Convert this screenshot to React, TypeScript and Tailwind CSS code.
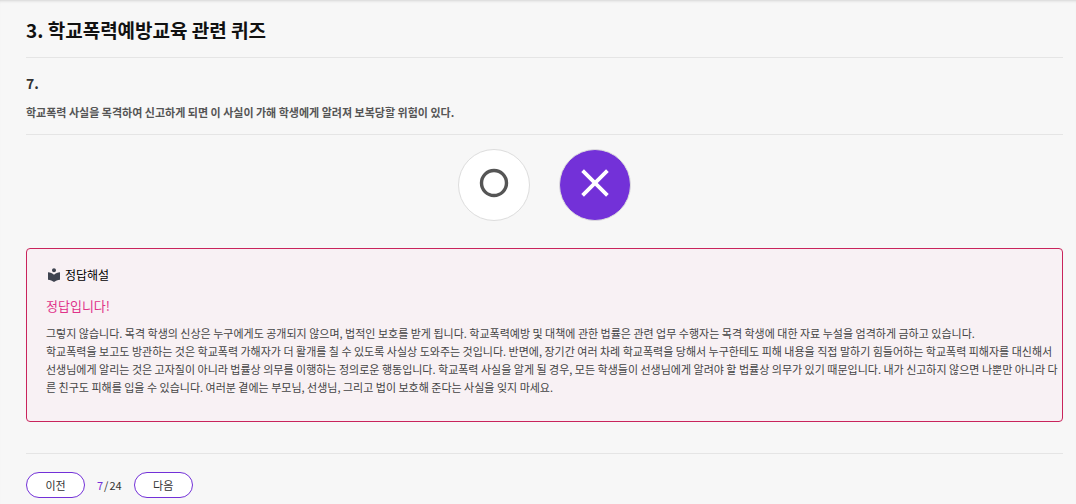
import React from 'react';
import { MdLocalLibrary } from 'react-icons/md';

const Answers: React.FC = () => {
    return (
        <div className="flex justify-center gap-[29px] pt-[14px]">
          <button type="button" aria-label="O" aria-pressed="false" className="flex w-[72px] h-[72px] justify-center pt-[18px] rounded-full border border-[#dddddd] bg-white text-[#555555]">
            <svg width="30" height="30" viewBox="0 0 30 30" fill="none" stroke="currentColor" strokeWidth="3.4">
              <circle cx="15" cy="15" r="12.5" />
            </svg>
          </button>
          <button type="button" aria-label="X" aria-pressed="true" className="flex w-[72px] h-[72px] justify-center pt-[18px] rounded-full border border-[#dddddd] bg-[#7331d8] text-white">
            <svg width="30" height="30" viewBox="0 0 30 30" fill="none" stroke="currentColor" strokeWidth="3.8">
              <path d="M2.6 2.6L27.4 27.4M27.4 2.6L2.6 27.4" />
            </svg>
          </button>
        </div>
    );
};

const Explanation: React.FC = () => {
    return (
        <section className="mt-[27px] pl-[19px] pt-4 pb-[25px] border border-[#c9245c] rounded bg-[#f8f1f4]">
          <h3 className="flex items-center gap-[3px] text-xs leading-5 text-black">
            <MdLocalLibrary className="w-4 h-4 text-[#3f4450]" />
            정답해설
          </h3>
          <p className="mt-[11px] text-[13px] leading-5 text-[#e0338a]">정답입니다!</p>
          <p className="mt-2 text-[11px] leading-[18px] text-[#444444]">
            그렇지 않습니다. 목격 학생의 신상은 누구에게도 공개되지 않으며, 법적인 보호를 받게 됩니다. 학교폭력예방 및 대책에 관한 법률은 관련 업무 수행자는 목격 학생에 대한 자료 누설을 엄격하게 금하고 있습니다.
            <br />
            학교폭력을 보고도 방관하는 것은 학교폭력 가해자가 더 활개를 칠 수 있도록 사실상 도와주는 것입니다. 반면에, 장기간 여러 차례 학교폭력을 당해서 누구한테도 피해 내용을 직접 말하기 힘들어하는 학교폭력 피해자를 대신해서
            <br />
            선생님에게 알리는 것은 고자질이 아니라 법률상 의무를 이행하는 정의로운 행동입니다. 학교폭력 사실을 알게 될 경우, 모든 학생들이 선생님에게 알려야 할 법률상 의무가 있기 때문입니다. 내가 신고하지 않으면 나뿐만 아니라 다
            <br />
            른 친구도 피해를 입을 수 있습니다. 여러분 곁에는 부모님, 선생님, 그리고 법이 보호해 준다는 사실을 잊지 마세요.
          </p>
        </section>
    );
};

const Pager: React.FC = () => {
    return (
        <nav className="flex items-center gap-3 mt-[31px] pt-[18px] border-t border-[#e5e5e5] text-[11px] text-[#333333]">
          <button type="button" className="w-[59px] h-[26px] rounded-full border border-[#7331d8] bg-white">이전</button>
          <span className="flex gap-px"><span className="text-[#7331d8]">7</span><span>/</span><span>24</span></span>
          <button type="button" className="w-[59px] h-[26px] rounded-full border border-[#7331d8] bg-white">다음</button>
        </nav>
    );
};

const App: React.FC = () => {
    return (
        <main className="min-h-screen pl-[26px] pr-[13px] pb-[6px] bg-[#f7f7f7] shadow-[inset_0_3px_3px_-2px_#d4d4d4] font-['Noto_Sans_CJK_KR',sans-serif]">
          <h1 className="pt-[15px] pb-[13px] border-b border-[#e5e5e5] text-[19px] leading-[29px] font-bold text-[#111111]">3. 학교폭력예방교육 관련 퀴즈</h1>
          <div className="pt-[15px] pb-3 border-b border-[#e5e5e5]">
            <h2 className="text-sm leading-5 font-bold text-[#333333]">7.</h2>
            <p className="mt-[9px] text-[11px] leading-5 font-bold text-[#555555]">학교폭력 사실을 목격하여 신고하게 되면 이 사실이 가해 학생에게 알려져 보복당할 위험이 있다.</p>
          </div>
          <Answers />
          <Explanation />
          <Pager />
        </main>
    );
};

export default App;
